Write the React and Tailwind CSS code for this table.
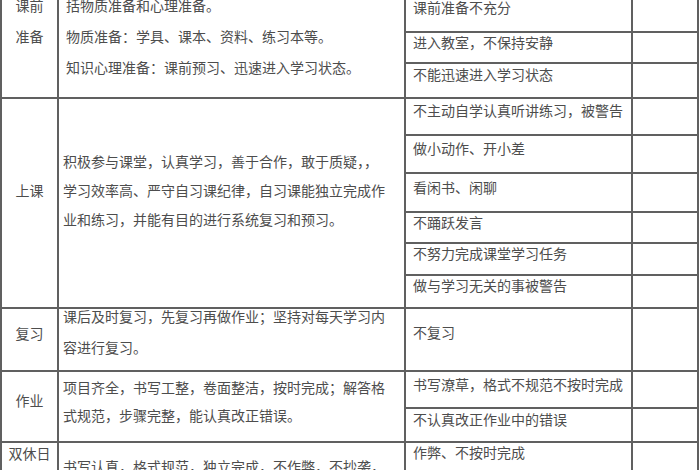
const sections = [
  {
    label: ["课前", "准备"],
    labelPad: "pt-[38px] leading-[31px]",
    body: ["认真做好课前准备，课前准备包", "括物质准备和心理准备。", "物质准备：学具、课本、资料、练习本等。", "知识心理准备：课前预习、迅速进入学习状态。"],
    bodyPad: "pt-[7px] pl-[7px] leading-[31px]",
    rows: [
      { text: "课前准备不充分", cls: "h-[81px] pt-[46px]" },
      { text: "进入教室，不保持安静", cls: "h-[31px] pt-0" },
      { text: "不能迅速进入学习状态", cls: "h-[35px] pt-[1px]" },
    ],
  },
  {
    label: ["上课"],
    labelPad: "pt-[77px] leading-[29px]",
    body: ["积极参与课堂，认真学习，善于合作，敢于质疑，，", "学习效率高、严守自习课纪律，自习课能独立完成作", "业和练习，并能有目的进行系统复习和预习。"],
    bodyPad: "pt-[48px] pl-[4px] leading-[29px]",
    rows: [
      { text: "不主动自学认真听讲练习，被警告", cls: "h-[37px] pt-[2px]" },
      { text: "做小动作、开小差", cls: "h-[38px] pt-[3px]" },
      { text: "看闲书、闲聊", cls: "h-[39px] pt-[4px]" },
      { text: "不踊跃发言", cls: "h-[31px] pt-0" },
      { text: "不努力完成课堂学习任务", cls: "h-[32px] pt-0" },
      { text: "做与学习无关的事被警告", cls: "h-[33px] pt-0" },
    ],
  },
  {
    label: ["复习"],
    labelPad: "pt-[14px] leading-[20px]",
    body: ["课后及时复习，先复习再做作业；坚持对每天学习内", "容进行复习。"],
    bodyPad: "-mt-[8px] pl-[4px] leading-[31px]",
    rows: [{ text: "不复习", cls: "h-[63px] pt-[14px]" }],
  },
  {
    label: ["作业"],
    labelPad: "pt-[18px] leading-[20px]",
    body: ["项目齐全，书写工整，卷面整洁，按时完成；解答格", "式规范，步骤完整，能认真改正错误。"],
    bodyPad: "pt-[1px] pl-[4px] leading-[28px]",
    rows: [
      { text: "书写潦草，格式不规范不按时完成", cls: "h-[37px] pt-[3px]" },
      { text: "不认真改正作业中的错误", cls: "h-[34px] pt-[1px]" },
    ],
  },
  {
    label: ["双休日"],
    labelPad: "pt-0 leading-[20px]",
    body: ["书写认真，格式规范，独立完成，不作弊，不抄袭，", "按时完成。"],
    bodyPad: "pt-[13px] pl-[4px] leading-[20px]",
    rows: [
      { text: "作弊、不按时完成", cls: "h-[40px] pt-0" },
      { text: "抄袭他人作业", cls: "h-[40px] pt-0" },
    ],
  },
];

function Section({ s }) {
  return (
    <div className="flex">
      <div className={`w-[57px] shrink-0 border-r-2 border-b-2 border-[#606060] text-center ${s.labelPad}`}>
        {s.label.map((l) => (
          <div key={l} className="whitespace-nowrap">{l}</div>
        ))}
      </div>
      <div className="w-[347px] shrink-0 border-r-2 border-b-2 border-[#606060]">
        <div className={s.bodyPad}>
          {s.body.map((l) => (
            <div key={l} className="whitespace-nowrap">{l}</div>
          ))}
        </div>
      </div>
      <div className="flex flex-col">
        {s.rows.map((r) => {
          const [h, pt] = r.cls.split(" ");
          return (
            <div key={r.text} className={`flex border-b-2 border-[#606060] ${h}`}>
              <div className={`w-[227px] shrink-0 border-r-2 border-[#606060] pl-[7px] leading-[18px] whitespace-nowrap ${pt}`}>
                {r.text}
              </div>
              <div className="w-[66px] shrink-0 border-r-2 border-[#606060]" />
            </div>
          );
        })}
      </div>
    </div>
  );
}

export default function App() {
  return (
    <div
      className="w-[700px] h-[470px] overflow-hidden bg-white text-[14px] text-[#4d4d4d]"
      style={{ fontFamily: '"Noto Sans CJK SC", "Noto Sans", sans-serif' }}
    >
      <div className="-mt-[48px] w-[699px] border-l-2 border-[#606060]">
        {sections.map((s, i) => (
          <Section key={i} s={s} />
        ))}
      </div>
    </div>
  );
}
